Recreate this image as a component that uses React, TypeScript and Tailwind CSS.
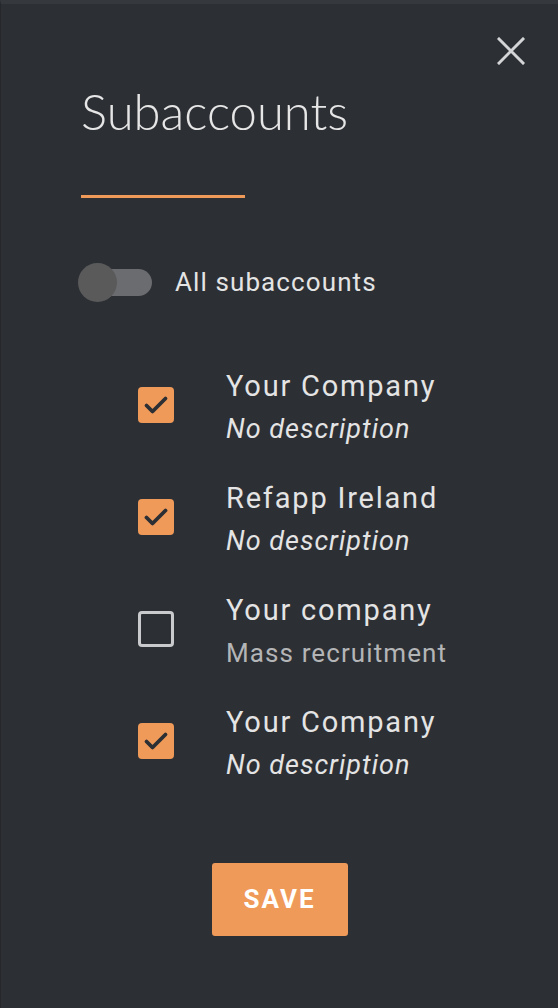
import { useState } from "react";

// ================= DATA =================
interface Subaccount {
  id: number;
  name: string;
  description: string | null;
  checked: boolean;
}

const initial: Subaccount[] = [
  { id: 1, name: "Your Company", description: null, checked: true },
  { id: 2, name: "Refapp Ireland", description: null, checked: true },
  { id: 3, name: "Your company", description: "Mass recruitment", checked: false },
  { id: 4, name: "Your Company", description: null, checked: true },
];

const roboto = { fontFamily: "Roboto, 'Liberation Sans', sans-serif" };

// ================= PIECES =================
function CheckBox({ checked, onClick }: { checked: boolean; onClick: () => void }) {
  return (
    <button
      onClick={onClick}
      className={
        checked
          ? "mt-[21px] w-9 h-9 rounded-[4px] bg-[#f09a5a] flex items-center justify-center shrink-0"
          : "mt-[21px] w-9 h-9 rounded-[4px] border-[3px] border-[#c9cacc] shrink-0"
      }
    >
      {checked && (
        <svg width="36" height="36" viewBox="0 0 36 36" fill="none">
          <path
            d="M8.5 18.5 L14.5 24.5 L27.5 11.5"
            stroke="#2c2f34"
            strokeWidth="3.8"
            strokeLinecap="round"
            strokeLinejoin="round"
          />
        </svg>
      )}
    </button>
  );
}

// ================= MAIN =================
export default function App() {
  const [items, setItems] = useState(initial);
  const [all, setAll] = useState(false);

  const toggle = (id: number) =>
    setItems((prev) => prev.map((s) => (s.id === id ? { ...s, checked: !s.checked } : s)));

  return (
    <div className="w-[558px] h-[1008px] bg-[#2c2f34] border-t-4 border-[#35383d] border-l border-l-[#25272b] relative overflow-hidden">
      {/* close */}
      <button className="absolute right-[33px] top-[33px] w-7 h-7 flex items-center justify-center">
        <svg width="28" height="28" viewBox="0 0 28 28" fill="none">
          <path d="M2 2 L26 26 M26 2 L2 26" stroke="#d4d5d6" strokeWidth="3" strokeLinecap="square" />
        </svg>
      </button>

      <div className="pl-[80px] pt-[79px]">
        <h1
          className="text-[49px] leading-[56px] font-light text-[#e6e6e6]"
          style={{ fontFamily: "Lato, 'Open Sans', sans-serif" }}
        >
          Subaccounts
        </h1>
        <div className="mt-[56px] w-[164px] h-[3px] bg-[#f09a5a]" />

        {/* all toggle */}
        <div className="mt-[64px] flex items-center -ml-[3px]">
          <button
            onClick={() => setAll(!all)}
            className="relative w-[74px] h-[40px] flex items-center"
          >
            <span className="absolute left-[1px] right-0 h-[27px] rounded-full bg-[#6b6c70]" />
            <span
              className={
                all
                  ? "absolute right-0 w-[39px] h-[39px] rounded-full bg-[#f09a5a]"
                  : "absolute left-0 w-[39px] h-[39px] rounded-full bg-[#5a5a5b]"
              }
            />
          </button>
          <span className="ml-[23px] text-[26px] tracking-[1.1px] text-[#e4e4e4]" style={roboto}>
            All subaccounts
          </span>
        </div>

        {/* list */}
        <div className="mt-[64px] pl-[57px] flex flex-col gap-[30px]" style={roboto}>
          {items.map((s) => (
            <div key={s.id} className="flex items-start">
              <CheckBox checked={s.checked} onClick={() => toggle(s.id)} />
              <div className="ml-[52px]">
                <p className="text-[29px] leading-[40px] tracking-[1.8px] text-[#e4e4e4]">{s.name}</p>
                {s.description ? (
                  <p className="mt-[4px] text-[26px] leading-[38px] tracking-[1.1px] text-[#b4b5b7]">
                    {s.description}
                  </p>
                ) : (
                  <p className="mt-[4px] text-[27px] leading-[38px] tracking-[1px] italic text-[#e4e4e4]">
                    No description
                  </p>
                )}
              </div>
            </div>
          ))}
        </div>
      </div>

      <div className="mt-[79px] flex justify-center">
        <button
          className="w-[136px] h-[73px] rounded-[3px] bg-[#f09a5a] text-white text-[26px] font-bold tracking-[2px]"
          style={roboto}
        >
          SAVE
        </button>
      </div>
    </div>
  );
}
